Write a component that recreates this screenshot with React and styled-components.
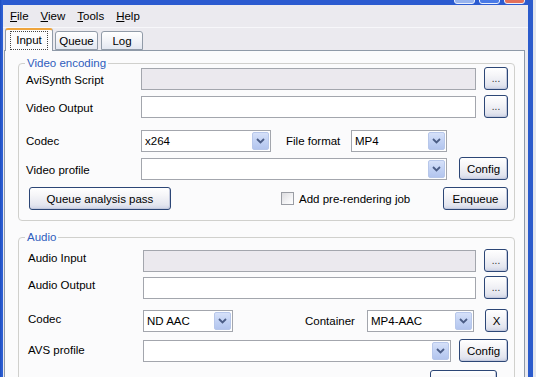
import React from "react";
import styled, { createGlobalStyle } from "styled-components";

const GlobalStyle = createGlobalStyle`
  html, body { margin: 0; padding: 0; background: #e2e6ee; }
  body { font-family: "Liberation Sans", Arial, sans-serif; font-size: 11.5px; color: #000; }
  * { box-sizing: border-box; }
`;

const Screen = styled.div`
  width: 536px;
  height: 377px;
  overflow: hidden;
  display: flex;
  background: #e2e6ee;
`;

const Window = styled.div`
  width: 533px;
  height: 100%;
  display: flex;
  flex-direction: column;
  padding: 0 5px 0 3px;
  background: linear-gradient(90deg, #1d4dbf 0, #2d5fd3 2px, #2b5bcc 100%);
`;

const TitleBar = styled.div`
  height: 5px;
  flex-shrink: 0;
  display: flex;
  justify-content: flex-end;
  align-items: flex-end;
  gap: 4px;
  padding-right: 3px;
  overflow: hidden;
  background: #2b5bd0;
`;

const captionColors = {
  min: "#98b4ee",
  max: "#4a7ae6",
  close: "#e3705a",
};

const CaptionButton = styled.div`
  width: 21px;
  height: 21px;
  flex-shrink: 0;
  margin-bottom: 1px;
  border: 1px solid #e8eefc;
  border-radius: 3px;
  background: ${(p) => captionColors[p.$kind]};
`;

const Body = styled.div`
  flex: 1;
  display: flex;
  flex-direction: column;
  overflow: hidden;
  background: #ebeaef;
`;

const MenuBar = styled.div`
  height: 23px;
  flex-shrink: 0;
  display: flex;
  align-items: center;
  padding-left: 1px;
  border-bottom: 1px solid #f7f7fa;
`;

const MenuItem = styled.span`
  padding: 0 6px;
  line-height: 22px;
  u { text-decoration: underline; text-underline-offset: 1px; }
`;

const TabStrip = styled.div`
  height: 22px;
  flex-shrink: 0;
  display: flex;
  align-items: flex-end;
  padding-left: 2px;
  position: relative;
  z-index: 1;
`;

const Tab = styled.div`
  width: ${(p) => p.$w}px;
  margin-right: ${(p) => p.$mr || 0}px;
  height: ${(p) => (p.$active ? 23 : 19)}px;
  margin-bottom: ${(p) => (p.$active ? -1 : 0)}px;
  display: flex;
  align-items: center;
  justify-content: center;
  border: 1px solid #919ba8;
  border-bottom: ${(p) => (p.$active ? "none" : "1px solid #919ba8")};
  border-top: ${(p) => (p.$active ? "2px solid #eea43c" : "1px solid #919ba8")};
  border-radius: 3px 3px 0 0;
  background: ${(p) =>
    p.$active
      ? "#fcfcfd"
      : "linear-gradient(180deg, #ffffff 0%, #f3f4f8 50%, #e3e7f0 100%)"};
`;

const FocusText = styled.span`
  border: 1px dotted #444;
  padding: 1px 5px 2px;
  line-height: 14px;
`;

const Panel = styled.div`
  flex: 1;
  margin: 0 3px 0 1px;
  border: 1px solid #8f9aa8;
  background: #fbfbfc;
  padding: 12px 9px 0 13px;
  display: flex;
  flex-direction: column;
`;

const Group = styled.div`
  position: relative;
  flex-shrink: 0;
  border: 1px solid #d0d0cd;
  border-radius: 4px;
  margin-top: ${(p) => p.$mt || 0}px;
  padding: ${(p) => p.$pt}px 6px ${(p) => p.$pb}px ${(p) => p.$pl}px;
  display: flex;
  flex-direction: column;
`;

const Legend = styled.span`
  position: absolute;
  top: -8px;
  left: 6px;
  padding: 0 2px;
  line-height: 14px;
  color: #2f5dbd;
  background: #fbfbfc;
`;

const Row = styled.div`
  height: 23px;
  display: flex;
  align-items: center;
  margin-top: ${(p) => p.$mt || 0}px;
`;

const Label = styled.span`
  width: ${(p) => p.$w || 115}px;
  flex-shrink: 0;
  margin-top: ${(p) => p.$dy || 0}px;
  white-space: nowrap;
`;

const InlineLabel = styled.span`
  width: ${(p) => p.$w}px;
  margin-left: ${(p) => p.$ml || 0}px;
  flex-shrink: 0;
  white-space: nowrap;
`;

const TextBox = styled.div`
  flex: 1;
  height: 22px;
  border: 1px solid #a3a6ad;
  background: ${(p) => (p.$disabled ? "#ebe9ee" : "#ffffff")};
`;

const ComboBox = styled.div`
  width: ${(p) => (p.$w ? `${p.$w}px` : "auto")};
  flex: ${(p) => (p.$w ? "0 0 auto" : "1")};
  height: 22px;
  border: 1px solid #a3a6ad;
  background: #ffffff;
  display: flex;
  align-items: stretch;
`;

const ComboValue = styled.span`
  flex: 1;
  padding-left: 3px;
  line-height: 20px;
  white-space: nowrap;
  overflow: hidden;
`;

const DropButton = styled.span`
  width: 17px;
  margin: 1px;
  flex-shrink: 0;
  border: 1px solid #b7c7ea;
  border-radius: 2px;
  background: linear-gradient(180deg, #d6e1f9 0%, #c2d2f4 50%, #b3c5ee 100%);
  display: flex;
  align-items: center;
  justify-content: center;
`;

const Button = styled.button`
  width: ${(p) => p.$w}px;
  height: 23px;
  flex-shrink: 0;
  margin-left: ${(p) => (p.$auto ? "auto" : `${p.$ml || 0}px`)};
  margin-right: ${(p) => p.$mr || 0}px;
  padding: 0;
  font: inherit;
  color: #000;
  border: 1px solid #2c4676;
  border-radius: 3px;
  background: linear-gradient(180deg, #ffffff 0%, #f5f5f8 35%, #e4e6ef 80%, #cfd4e6 100%);
  box-shadow: inset -1px -1px 0 #c3c9dd;
  line-height: 20px;
`;

const DotsButton = styled(Button)`
  margin-left: 8px;
  font-size: 10px;
  line-height: 16px;
  color: #333;
`;

const CheckWrap = styled.label`
  display: flex;
  align-items: center;
  gap: 5px;
  margin-left: ${(p) => p.$ml}px;
  white-space: nowrap;
`;

const CheckBox = styled.span`
  width: 13px;
  height: 13px;
  border: 1px solid #9a9da4;
  background: linear-gradient(135deg, #dcdcdf 0%, #f3f3f5 60%, #ffffff 100%);
`;

const Chevron = () => (
  <svg width="9" height="6" viewBox="0 0 9 6">
    <path d="M1 1 L4.5 4.5 L8 1" fill="none" stroke="#4b5d86" strokeWidth="1.8" />
  </svg>
);

const Combo = ({ value, w }) => (
  <ComboBox $w={w}>
    <ComboValue>{value}</ComboValue>
    <DropButton>
      <Chevron />
    </DropButton>
  </ComboBox>
);

export default function App() {
  return (
    <>
      <GlobalStyle />
      <Screen>
        <Window>
          <TitleBar>
            <CaptionButton $kind="min" />
            <CaptionButton $kind="max" />
            <CaptionButton $kind="close" />
          </TitleBar>
          <Body>
            <MenuBar>
              <MenuItem><u>F</u>ile</MenuItem>
              <MenuItem><u>V</u>iew</MenuItem>
              <MenuItem><u>T</u>ools</MenuItem>
              <MenuItem><u>H</u>elp</MenuItem>
            </MenuBar>
            <TabStrip>
              <Tab $active $w={48} $mr={2}>
                <FocusText>Input</FocusText>
              </Tab>
              <Tab $w={43} $mr={3}>Queue</Tab>
              <Tab $w={42}>Log</Tab>
            </TabStrip>
            <Panel>
              <Group $pt={3} $pb={10} $pl={7}>
                <Legend>Video encoding</Legend>
                <Row>
                  <Label $dy={3}>AviSynth Script</Label>
                  <TextBox $disabled />
                  <DotsButton $w={24}>...</DotsButton>
                </Row>
                <Row $mt={5}>
                  <Label $dy={2}>Video Output</Label>
                  <TextBox />
                  <DotsButton $w={24}>...</DotsButton>
                </Row>
                <Row $mt={11}>
                  <Label $dy={1}>Codec</Label>
                  <Combo value="x264" w={130} />
                  <InlineLabel $w={65} $ml={15}>File format</InlineLabel>
                  <Combo value="MP4" w={96} />
                </Row>
                <Row $mt={5}>
                  <Label $dy={2}>Video profile</Label>
                  <Combo value="" />
                  <Button $w={49} $ml={12}>Config</Button>
                </Row>
                <Row $mt={7}>
                  <Button $w={142} $ml={3}>Queue analysis pass</Button>
                  <CheckWrap $ml={110}>
                    <CheckBox />
                    Add pre-rendering job
                  </CheckWrap>
                  <Button $w={65} $auto>Enqueue</Button>
                </Row>
              </Group>
              <Group $mt={16} $pt={11} $pb={0} $pl={9}>
                <Legend>Audio</Legend>
                <Row>
                  <Label $dy={-5}>Audio Input</Label>
                  <TextBox $disabled />
                  <DotsButton $w={24}>...</DotsButton>
                </Row>
                <Row $mt={4}>
                  <Label $dy={-5}>Audio Output</Label>
                  <TextBox />
                  <DotsButton $w={24}>...</DotsButton>
                </Row>
                <Row $mt={10}>
                  <Label $dy={-4}>Codec</Label>
                  <Combo value="ND AAC" w={90} />
                  <InlineLabel $w={62} $ml={72}>Container</InlineLabel>
                  <Combo value="MP4-AAC" w={107} />
                  <Button $w={23} $ml={11}>X</Button>
                </Row>
                <Row $mt={7}>
                  <Label $dy={-2}>AVS profile</Label>
                  <Combo value="" />
                  <Button $w={49} $ml={8}>Config</Button>
                </Row>
                <Row $mt={8}>
                  <Button $w={67} $auto $mr={11} aria-label="Enqueue" />
                </Row>
              </Group>
            </Panel>
          </Body>
        </Window>
      </Screen>
    </>
  );
}
